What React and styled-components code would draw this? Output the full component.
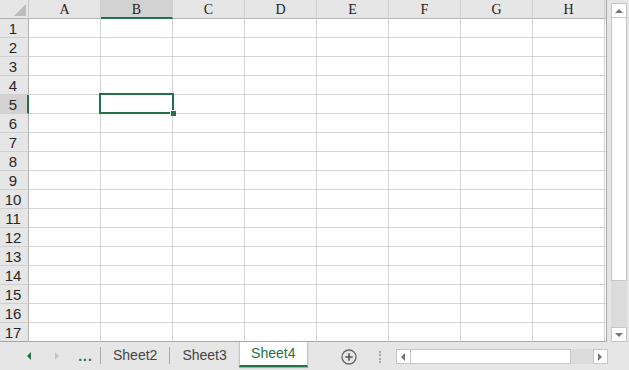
import React from 'react';
import styled, { createGlobalStyle, css } from 'styled-components';

const GREEN = '#217346';
const COLS = ['A', 'B', 'C', 'D', 'E', 'F', 'G', 'H', ''];
const ROWS = Array.from({ length: 17 }, (_, i) => i + 1);
const SEL_COL = 'B';
const SEL_ROW = 5;

const Global = createGlobalStyle`
  html, body { margin: 0; padding: 0; background: #fff; }
  body { width: 629px; height: 370px; overflow: hidden; }
  * { box-sizing: border-box; }
`;

const Window = styled.div`
  width: 629px;
  height: 370px;
  display: flex;
  flex-direction: column;
  background: #e6e6e6;
  overflow: hidden;
`;

const Main = styled.div`
  display: flex;
  height: 342px;
`;

const Sheet = styled.div`
  width: 607px;
  height: 342px;
  overflow: hidden;
  background: #fff;
  border-right: 1px solid #a8a8a8;
`;

const Grid = styled.div`
  display: grid;
  grid-template-columns: 29px repeat(8, 72px) 72px;
  grid-template-rows: 19px repeat(17, 19px);
  width: 677px;
`;

const Corner = styled.div`
  background: #e6e6e6;
  border-right: 1px solid #c8c8c8;
  border-bottom: 1px solid #b4b4b4;
  display: flex;
  align-items: flex-end;
  justify-content: flex-end;
  padding: 0 2px 2px 0;
`;

const ColHead = styled.div`
  background: ${p => (p.$active ? '#d2d2d2' : '#e6e6e6')};
  border-right: 1px solid #d0d0d0;
  border-bottom: ${p => (p.$active ? `2px solid ${GREEN}` : '1px solid #b4b4b4')};
  font-family: 'Liberation Serif', serif;
  font-size: 14px;
  color: #222;
  display: flex;
  align-items: center;
  justify-content: center;
  line-height: 1;
  padding-top: ${p => (p.$active ? '2px' : '1px')};
`;

const RowHead = styled.div`
  background: ${p => (p.$active ? '#d2d2d2' : '#e6e6e6')};
  border-bottom: 1px solid ${p => (p.$last ? '#a8a8a8' : '#d0d0d0')};
  border-right: ${p => (p.$active ? `2px solid ${GREEN}` : '1px solid #b4b4b4')};
  font-family: 'Liberation Sans', sans-serif;
  font-size: 15px;
  color: #262626;
  display: flex;
  align-items: center;
  justify-content: center;
  padding-top: 1px;
  padding-right: ${p => (p.$active ? '1px' : '2px')};
`;

const Cell = styled.div`
  position: relative;
  border-right: 1px solid #d4d4d4;
  border-bottom: 1px solid ${p => (p.$last ? '#a8a8a8' : '#d4d4d4')};
`;

const Selection = styled.div`
  position: absolute;
  left: -2px;
  top: -2px;
  width: 75px;
  height: 21px;
  border: 2px solid ${GREEN};
  z-index: 2;
`;

const Handle = styled.div`
  position: absolute;
  right: -4px;
  bottom: -4px;
  width: 6px;
  height: 6px;
  background: ${GREEN};
  border: 1px solid #fff;
  border-right: none;
  border-bottom: none;
`;

const VPanel = styled.div`
  flex: 1;
  display: flex;
  justify-content: center;
  padding-top: 3px;
  padding-left: 2px;
`;

const VScroll = styled.div`
  width: 16px;
  height: 339px;
  display: flex;
  flex-direction: column;
`;

const ArrowBox = styled.div`
  width: ${p => p.$w || 16}px;
  height: ${p => p.$h || 15}px;
  background: #fff;
  border: 1px solid #c6c6c6;
  display: flex;
  align-items: center;
  justify-content: center;
  flex-shrink: 0;
`;

const VThumb = styled.div`
  height: 263px;
  background: #fff;
  border: 1px solid #c6c6c6;
  border-top: none;
`;

const VTrack = styled.div`
  flex: 1;
  background: #dcdcdc;
`;

const TabBar = styled.div`
  height: 28px;
  display: flex;
  align-items: stretch;
  padding-left: 15px;
  font-family: 'Liberation Sans', sans-serif;
`;

const Nav = styled.div`
  width: ${p => p.$w || 28}px;
  display: flex;
  align-items: center;
  justify-content: center;
  color: ${GREEN};
  font-size: 14px;
  font-weight: bold;
  letter-spacing: 1px;
`;

const Divider = styled.div`
  width: 1px;
  margin: 5px 0 6px;
  background: #a8a8a8;
`;

const Tab = styled.div`
  display: flex;
  align-items: center;
  justify-content: center;
  padding: 0 12px 3px;
  font-size: 14px;
  color: #444;
  ${p =>
    p.$active &&
    css`
      background: #fff;
      color: ${GREEN};
      width: 69px;
      padding: 0 0 2px;
      border-left: 1px solid #c6c6c6;
      border-right: 1px solid #c6c6c6;
      border-bottom: 2px solid ${GREEN};
      margin-bottom: 3px;
      box-shadow: 0 1px 1px rgba(0, 0, 0, 0.25);
    `}
`;

const AddButton = styled.div`
  margin-left: 33px;
  display: flex;
  align-items: center;
  padding-top: 1px;
`;

const Dots = styled.div`
  margin-left: 22px;
  width: 2px;
  margin-top: 9px;
  height: 12px;
  border-left: 2px dotted #a6a6a6;
`;

const HScroll = styled.div`
  margin-left: 15px;
  width: 212px;
  display: flex;
  align-items: center;
  padding-top: 1px;
`;

const HThumb = styled.div`
  width: 160px;
  height: 15px;
  background: #fff;
  border: 1px solid #c6c6c6;
  border-left: none;
`;

const HTrack = styled.div`
  width: 22px;
  height: 15px;
  background: #dcdcdc;
`;

const Tri = ({ dir, color = '#777' }) => {
  const pts = {
    up: '0,5 4,1 8,5',
    down: '0,1 4,5 8,1',
    left: '5,0 1,4 5,8',
    right: '1,0 5,4 1,8',
  }[dir];
  const vertical = dir === 'up' || dir === 'down';
  return (
    <svg width={vertical ? 8 : 6} height={vertical ? 6 : 8} viewBox={vertical ? '0 0 8 6' : '0 0 6 8'}>
      <polygon points={pts} fill={color} />
    </svg>
  );
};

const App = () => (
  <>
    <Global />
    <Window>
      <Main>
        <Sheet>
          <Grid>
            <Corner>
              <svg width="12" height="12" viewBox="0 0 12 12">
                <polygon points="12,0 12,12 0,12" fill="#bdbdbd" />
              </svg>
            </Corner>
            {COLS.map((c, i) => (
              <ColHead key={'h' + i} $active={c === SEL_COL}>
                {c}
              </ColHead>
            ))}
            {ROWS.map(r => (
              <React.Fragment key={r}>
                <RowHead $active={r === SEL_ROW} $last={r === ROWS.length}>
                  {r}
                </RowHead>
                {COLS.map((c, i) => (
                  <Cell key={i} $last={r === ROWS.length}>
                    {r === SEL_ROW && c === SEL_COL && (
                      <Selection>
                        <Handle />
                      </Selection>
                    )}
                  </Cell>
                ))}
              </React.Fragment>
            ))}
          </Grid>
        </Sheet>
        <VPanel>
          <VScroll>
            <ArrowBox>
              <Tri dir="up" />
            </ArrowBox>
            <VThumb />
            <VTrack />
            <ArrowBox>
              <Tri dir="down" />
            </ArrowBox>
          </VScroll>
        </VPanel>
      </Main>
      <TabBar>
        <Nav>
          <Tri dir="left" color={GREEN} />
        </Nav>
        <Nav>
          <Tri dir="right" color="#c4c4c4" />
        </Nav>
        <Nav $w={29}>...</Nav>
        <Divider />
        <Tab>Sheet2</Tab>
        <Divider />
        <Tab>Sheet3</Tab>
        <Tab $active>Sheet4</Tab>
        <AddButton>
          <svg width="16" height="16" viewBox="0 0 16 16">
            <circle cx="8" cy="8" r="7" fill="none" stroke="#666" strokeWidth="1.3" />
            <path d="M8 4.3v7.4M4.3 8h7.4" stroke="#555" strokeWidth="1.6" />
          </svg>
        </AddButton>
        <Dots />
        <HScroll>
          <ArrowBox $w={15} $h={15}>
            <Tri dir="left" />
          </ArrowBox>
          <HThumb />
          <HTrack />
          <ArrowBox $w={15} $h={15}>
            <Tri dir="right" />
          </ArrowBox>
        </HScroll>
      </TabBar>
    </Window>
  </>
);

export default App;
